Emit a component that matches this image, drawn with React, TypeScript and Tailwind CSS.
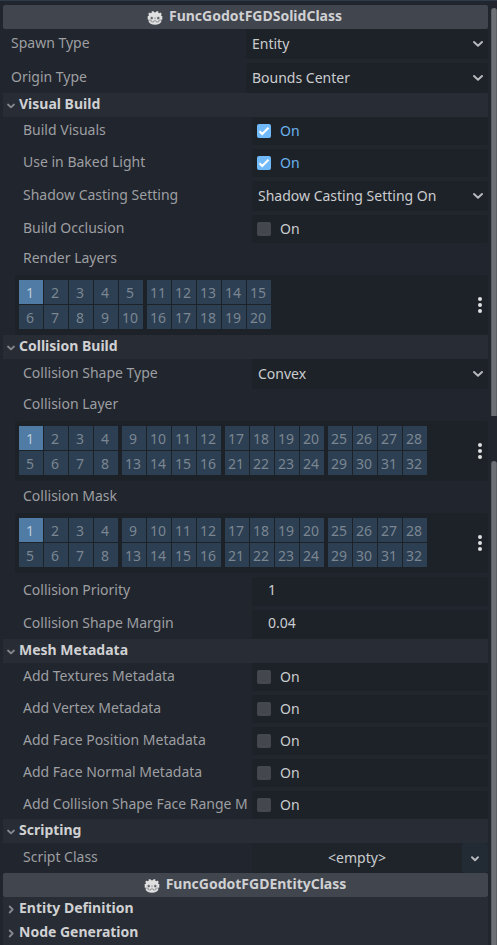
import type { ReactNode } from "react";

function GodotIcon() {
  return (
    <svg width="16" height="16" viewBox="0 0 16 16" className="mt-px shrink-0">
      <path
        fill="#e0e0e0"
        d="M6.200.9 4.600 1.400l.1 1.300-1 .6-1.200-.8L1.200 3.900l.8 1.200-.5.900H.700v3.600l1 .5v1.700c.9 1.800 3.200 2.900 6.300 2.900s5.400-1.100 6.300-2.900v-1.700l1-.5V6h-.8l-.5-.9.8-1.200-1.300-1.400-1.200.8-1-.6.1-1.300L9.800.9 9 2.200H7z"
      />
      <path fill="none" stroke="#777a80" strokeWidth=".7" d="M1.500 10 4.200 10.300v1.500l2.300.3.300-1.200h2.400l.3 1.200 2.300-.3v-1.500l2.700-.3" />
      <circle cx="4.700" cy="8" r="1.500" fill="#94969b" />
      <circle cx="11.300" cy="8" r="1.500" fill="#94969b" />
      <circle cx="4.800" cy="8.100" r=".8" fill="#505359" />
      <circle cx="11.200" cy="8.100" r=".8" fill="#505359" />
      <path stroke="#777a80" strokeWidth=".8" d="M8 7.300v1.900" />
    </svg>
  );
}

function Chevron() {
  return (
    <svg width="12" height="8" viewBox="0 0 12 8" fill="none" className="shrink-0">
      <path d="M2 2 6 5.800 10 2" stroke="#b6b8bb" strokeWidth="2" strokeLinecap="round" strokeLinejoin="round" />
    </svg>
  );
}

function SmallArrow({ open }: { open: boolean }) {
  return (
    <svg width="10" height="10" viewBox="0 0 10 10" fill="none" className="mt-0.5 shrink-0">
      <path
        d={open ? "M2 3.500 5 6.300 8 3.500" : "M3.700 1.500 6.700 4.500 3.700 7.500"}
        stroke="#85888e"
        strokeWidth="1.800"
        strokeLinecap="round"
        strokeLinejoin="round"
      />
    </svg>
  );
}

function ClassHeader({ name, shift }: { name: string; shift: string }) {
  return (
    <div className={`flex h-6 items-center justify-center gap-1.5 rounded-[2px] bg-[#41454d] font-bold text-[#d0d1d3] ${shift}`}>
      <GodotIcon />
      <span className="-mt-0.5">{name}</span>
    </div>
  );
}

function Section({ title, open = true }: { title: string; open?: boolean }) {
  return (
    <div className="flex h-6 items-center gap-[3px] bg-[#282c34] pl-[3px] font-bold text-[#d0d1d3]">
      <SmallArrow open={open} />
      <span className="-mt-0.5">{title}</span>
    </div>
  );
}

function Row({ label, children, top = false }: { label: string; children: ReactNode; top?: boolean }) {
  return (
    <div className="flex">
      <div className={`flex shrink-0 items-center overflow-hidden whitespace-nowrap pb-[3px] text-[#9d9fa2] ${top ? "w-[243px] pl-2" : "w-[249px] pl-5"}`}>
        <span className="w-[225px] overflow-hidden">{label}</span>
      </div>
      {children}
    </div>
  );
}

function Select({ value }: { value: string }) {
  return (
    <div className="flex h-[30px] flex-1 items-center justify-between rounded-[3px] bg-[#1d2229] pl-1.5 pr-1 text-[#cbccce]">
      <span className="-mt-px">{value}</span>
      <Chevron />
    </div>
  );
}

function Check({ on = false }: { on?: boolean }) {
  return (
    <div className={`flex h-7 flex-1 items-center gap-[9px] rounded-[3px] bg-[#1d2229] pl-[5px] ${on ? "text-[#6bb2ee]" : "text-[#cbccce]"}`}>
      <span className={`flex size-3.5 items-center justify-center rounded-[2px] ${on ? "bg-[#70bafa]" : "bg-[#44474e]"}`}>
        {on && (
          <svg width="14" height="14" viewBox="0 0 14 14" fill="none">
            <path d="M2.500 7.300 5.200 10 11.500 3.800" stroke="#fff" strokeWidth="2.100" />
          </svg>
        )}
      </span>
      <span className="-mt-px">On</span>
    </div>
  );
}

function NumberField({ value }: { value: string }) {
  return (
    <div className="flex h-[29px] flex-1 items-center rounded-[3px] bg-[#1d2229] pb-[3px] pl-4 text-[#cbccce]">{value}</div>
  );
}

function Layers({ label, groups, columns }: { label: string; groups: number; columns: number }) {
  return (
    <div>
      <div className="flex h-8 items-center pb-0.5 pl-5 text-[#9d9fa2]">{label}</div>
      <div className="ml-3 flex h-[60px] items-start justify-between rounded-[3px] bg-[#1d2229] pl-1 pr-[5px] pt-[5px]">
        <div className="flex gap-1">
          {Array.from({ length: groups }, (_, g) => (
            <div key={g} className={`grid gap-px ${columns === 5 ? "grid-cols-[repeat(5,24px)]" : "grid-cols-[repeat(4,24px)]"}`}>
              {Array.from({ length: columns * 2 }, (_, i) => {
                const n = g * columns * 2 + i + 1;
                return (
                  <span
                    key={n}
                    className={`flex h-6 items-center justify-center pr-0.5 pt-0.5 ${n === 1 ? "bg-[#4f7ba5] text-[#bbcad9]" : "bg-[#2c3f53] text-[#7b8691]"}`}
                  >
                    {n}
                  </span>
                );
              })}
            </div>
          ))}
        </div>
        <svg width="6" height="18" viewBox="0 0 6 18" fill="#e0e0e0" className="mt-4">
          <circle cx="3" cy="3" r="2" />
          <circle cx="3" cy="9" r="2" />
          <circle cx="3" cy="15" r="2" />
        </svg>
      </div>
    </div>
  );
}

export default function App() {
  return (
    <div className="flex h-[945px] w-[497px] overflow-hidden border-t border-[#2e3a47] bg-[#21252d] font-['Noto_Sans',sans-serif] text-[14px] leading-5">
      <div className="ml-[3px] w-[485px] shrink-0 pt-1">
        <ClassHeader name="FuncGodotFGDSolidClass" shift="pr-0.5" />
        <div className="flex flex-col gap-1">
          <Row label="Spawn Type" top><Select value="Entity" /></Row>
          <Row label="Origin Type" top><Select value="Bounds Center" /></Row>
        </div>
        <Section title="Visual Build" />
        <div className="flex flex-col gap-1">
          <Row label="Build Visuals"><Check on /></Row>
          <Row label="Use in Baked Light"><Check on /></Row>
          <Row label="Shadow Casting Setting"><Select value="Shadow Casting Setting On" /></Row>
          <Row label="Build Occlusion"><Check /></Row>
        </div>
        <Layers label="Render Layers" groups={2} columns={5} />
        <Section title="Collision Build" />
        <Row label="Collision Shape Type"><Select value="Convex" /></Row>
        <Layers label="Collision Layer" groups={4} columns={4} />
        <Layers label="Collision Mask" groups={4} columns={4} />
        <div className="flex flex-col gap-1 pt-1">
          <Row label="Collision Priority"><NumberField value="1" /></Row>
          <Row label="Collision Shape Margin"><NumberField value="0.04" /></Row>
        </div>
        <Section title="Mesh Metadata" />
        <div className="flex flex-col gap-1">
          <Row label="Add Textures Metadata"><Check /></Row>
          <Row label="Add Vertex Metadata"><Check /></Row>
          <Row label="Add Face Position Metadata"><Check /></Row>
          <Row label="Add Face Normal Metadata"><Check /></Row>
          <Row label="Add Collision Shape Face Range M"><Check /></Row>
        </div>
        <Section title="Scripting" />
        <Row label="Script Class">
          <div className="flex h-[30px] flex-1 text-[#cbccce]">
            <div className="flex flex-1 items-center justify-center rounded-[3px] bg-[#1f242b] pb-px">&lt;empty&gt;</div>
            <div className="flex w-[26px] items-center justify-center rounded-[3px] bg-[#222a33] pt-0.5">
              <svg width="10" height="8" viewBox="0 0 10 8" fill="none">
                <path d="M2 2.300 5 5.200 8 2.300" stroke="#b6b8bb" strokeWidth="2" strokeLinecap="round" strokeLinejoin="round" />
              </svg>
            </div>
          </div>
        </Row>
        <ClassHeader name="FuncGodotFGDEntityClass" shift="pr-px" />
        <Section title="Entity Definition" open={false} />
        <Section title="Node Generation" open={false} />
      </div>
      <div className="ml-[3px] flex w-1.5 flex-col bg-[#22252d] pt-[7px]">
        <div className="h-[408px] rounded-t-[3px] border-x border-[#5c5f64] bg-[#6d7074]" />
        <div className="mt-[45px] flex-1 rounded-t-[3px] border-x border-[#5c5f64] bg-[#6d7074]" />
      </div>
    </div>
  );
}
